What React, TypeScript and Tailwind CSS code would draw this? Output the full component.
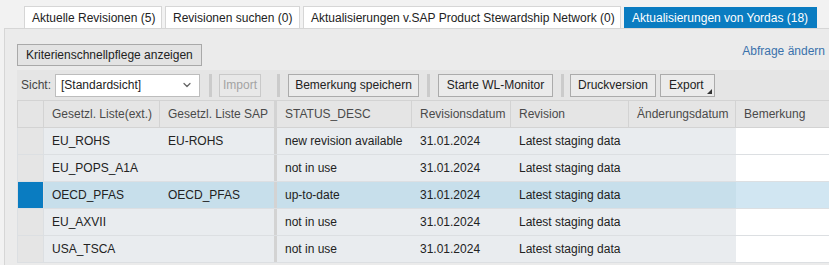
import { ChevronDown } from 'lucide-react';

const tabs = [
  { label: 'Aktuelle Revisionen (5)', w: 'w-[138px]' },
  { label: 'Revisionen suchen (0)', w: 'w-[135px]' },
  { label: 'Aktualisierungen v.SAP Product Stewardship Network (0)', w: 'w-[318px]' },
  { label: 'Aktualisierungen von Yordas (18)', w: 'w-[193px]', active: true },
];

const rows = [
  { ext: 'EU_ROHS', sap: 'EU-ROHS', status: 'new revision available' },
  { ext: 'EU_POPS_A1A', sap: '', status: 'not in use' },
  { ext: 'OECD_PFAS', sap: 'OECD_PFAS', status: 'up-to-date', selected: true },
  { ext: 'EU_AXVII', sap: '', status: 'not in use' },
  { ext: 'USA_TSCA', sap: '', status: 'not in use' },
];

const cols = 'grid grid-cols-[27px_116px_114px_3px_135px_99px_118px_107px_93px]';

function ToolButton({ children, className = '' }: { children: React.ReactNode; className?: string }) {
  return (
    <button className={`h-[23px] shrink-0 border border-[#ababab] bg-[#ebebeb] text-[#222] whitespace-nowrap ${className}`}>
      {children}
    </button>
  );
}

function Divider({ className = '' }: { className?: string }) {
  return <div className={`w-[3px] h-[23px] shrink-0 bg-[#cbcbcb] ${className}`} />;
}

export default function App() {
  return (
    <div className="w-[829px] h-[265px] overflow-hidden bg-[#f2f2f2] font-['Liberation_Sans',Arial,sans-serif] text-[12px] leading-none text-[#222] whitespace-nowrap">
      <div className="flex items-end h-[28px] pl-[24px] gap-[3px]">
        {tabs.map((t) => (
          <div
            key={t.label}
            className={
              t.active
                ? `${t.w} shrink-0 h-[21px] flex items-center px-[8px] bg-[#0a7cc1] text-white`
                : `${t.w} shrink-0 h-[22px] flex items-center px-[7px] border border-b-0 border-[#d6d6d6] bg-white text-[#222]`
            }
          >
            {t.label}
          </div>
        ))}
      </div>

      <div className="ml-[4px] h-[237px] border-l border-t border-[#d6d6d6] bg-[#ebebeb] pl-[12px]">
        <div className="flex items-center justify-between pt-[15px] pr-[4px]">
          <button className="h-[22px] px-[8px] border border-[#a9a9a9] bg-[#e3e3e3] text-[#222]">
            Kriterienschnellpflege anzeigen
          </button>
          <span className="text-[#3a72ab] -mt-[9px]">Abfrage ändern</span>
        </div>

        <div className="mt-[4px] h-[30px] flex items-center bg-[#e5e5e5] pl-[4px]">
          <span className="text-[#444] mr-[4px]">Sicht:</span>
          <div className="w-[145px] h-[23px] shrink-0 flex items-center justify-between border border-[#bdbdbd] bg-white pl-[5px] pr-[6px]">
            <span>[Standardsicht]</span>
            <ChevronDown size={12} strokeWidth={2.5} className="text-[#666]" />
          </div>
          <Divider className="ml-[9px] mr-[7px]" />
          <button className="h-[23px] w-[42px] shrink-0 border border-[#c9c9c9] bg-[#e8e8e8] text-[#a3a3a3]">Import</button>
          <Divider className="ml-[16px] mr-[8px]" />
          <ToolButton className="w-[131px]">Bemerkung speichern</ToolButton>
          <Divider className="ml-[8px] mr-[8px]" />
          <ToolButton className="w-[115px]">Starte WL-Monitor</ToolButton>
          <Divider className="ml-[8px] mr-[6px]" />
          <ToolButton className="w-[86px]">Druckversion</ToolButton>
          <div className="ml-[4px] relative">
            <ToolButton className="w-[55px] text-left pl-[8px]">Export</ToolButton>
            <span className="absolute right-[3px] bottom-[3px] w-0 h-0 border-l-[5px] border-l-transparent border-b-[5px] border-b-[#333]" />
          </div>
        </div>

        <div className={`${cols} h-[28px] bg-[#e5e5e5] border-t border-b border-[#d3d3d3] text-[#4a4a4a]`}>
          <div className="border-l border-r border-[#d3d3d3]" />
          <div className="flex items-center px-[8px] border-r border-[#d3d3d3]">Gesetzl. Liste(ext.)</div>
          <div className="flex items-center px-[8px]">Gesetzl. Liste SAP</div>
          <div className="bg-[#d3d3d3]" />
          <div className="flex items-center px-[8px] border-r border-[#d3d3d3]">STATUS_DESC</div>
          <div className="flex items-center px-[8px] border-r border-[#d3d3d3]">Revisionsdatum</div>
          <div className="flex items-center px-[8px] border-r border-[#d3d3d3]">Revision</div>
          <div className="flex items-center px-[8px] border-r border-[#d3d3d3]">Änderungsdatum</div>
          <div className="flex items-center px-[8px]">Bemerkung</div>
        </div>

        {rows.map((r) => {
          const cell = r.selected ? 'bg-[#c7dfeb]' : 'bg-[#e9ecef]';
          const line = 'border-b border-[#dcdfe2]';
          return (
            <div key={r.ext} className={`${cols} h-[27px]`}>
              <div className={`border-l border-r border-[#d3d3d3] ${r.selected ? 'bg-[#0a7cc1]' : 'bg-[#e5e5e5]'} ${line}`} />
              <div className={`flex items-center px-[8px] ${cell} ${line}`}>{r.ext}</div>
              <div className={`flex items-center px-[8px] ${cell} ${line}`}>{r.sap}</div>
              <div className={`bg-[#d3d3d3] ${line}`} />
              <div className={`flex items-center px-[8px] ${cell} ${line}`}>{r.status}</div>
              <div className={`flex items-center px-[8px] ${cell} ${line}`}>31.01.2024</div>
              <div className={`flex items-center px-[8px] ${cell} ${line}`}>Latest staging data</div>
              <div className={`${cell} ${line}`} />
              <div className={`${r.selected ? 'bg-[#d1e6f2]' : 'bg-white'} ${line}`} />
            </div>
          );
        })}
      </div>
    </div>
  );
}
